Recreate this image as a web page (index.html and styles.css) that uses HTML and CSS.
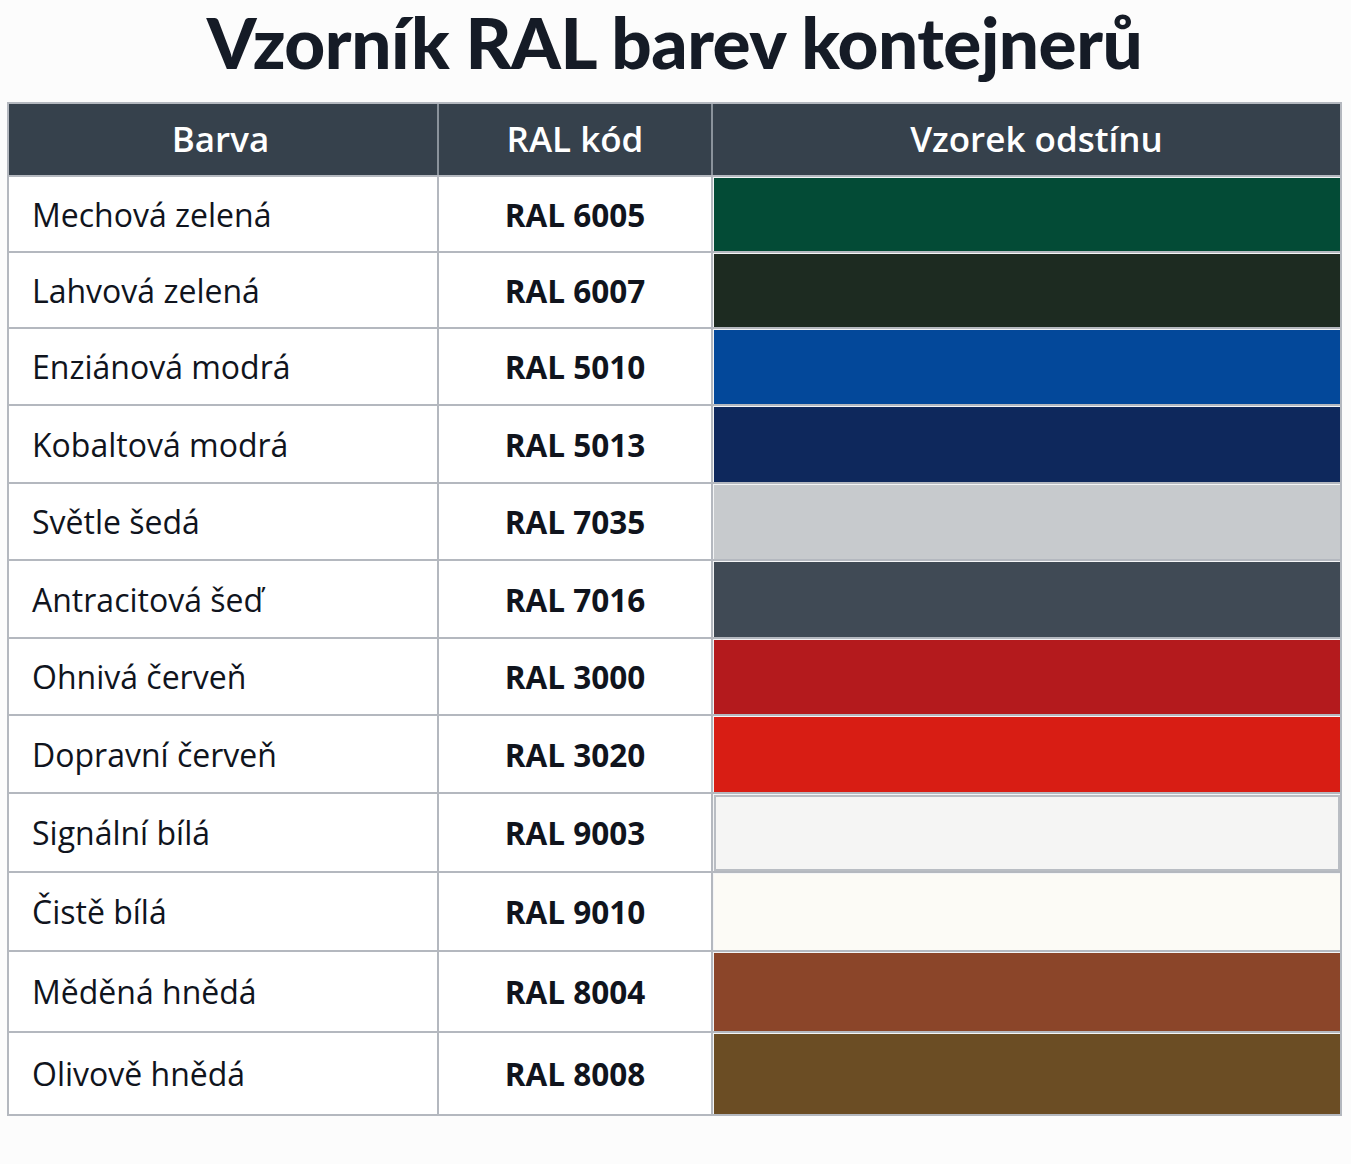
FILE: index.html
```html
<!DOCTYPE html>
<html lang="cs">
<head>
<meta charset="utf-8">
<title>Vzorník RAL barev kontejnerů</title>
<link rel="stylesheet" href="styles.css">
</head>
<body>
<div class="sheet">
  <h1 class="title">Vzorník RAL barev kontejnerů</h1>
  <div class="table">
    <div class="row head">
      <div class="cell">Barva</div>
      <div class="cell">RAL kód</div>
      <div class="cell">Vzorek odstínu</div>
    </div>
    <div class="row">
      <div class="cell name">Mechová zelená</div>
      <div class="cell code">RAL 6005</div>
      <div class="cell swatch"><div class="chip ral6005"></div></div>
    </div>
    <div class="row">
      <div class="cell name">Lahvová zelená</div>
      <div class="cell code">RAL 6007</div>
      <div class="cell swatch"><div class="chip ral6007"></div></div>
    </div>
    <div class="row">
      <div class="cell name">Enziánová modrá</div>
      <div class="cell code">RAL 5010</div>
      <div class="cell swatch"><div class="chip ral5010"></div></div>
    </div>
    <div class="row">
      <div class="cell name">Kobaltová modrá</div>
      <div class="cell code">RAL 5013</div>
      <div class="cell swatch"><div class="chip ral5013"></div></div>
    </div>
    <div class="row">
      <div class="cell name">Světle šedá</div>
      <div class="cell code">RAL 7035</div>
      <div class="cell swatch"><div class="chip ral7035"></div></div>
    </div>
    <div class="row">
      <div class="cell name">Antracitová šeď</div>
      <div class="cell code">RAL 7016</div>
      <div class="cell swatch"><div class="chip ral7016"></div></div>
    </div>
    <div class="row">
      <div class="cell name">Ohnivá červeň</div>
      <div class="cell code">RAL 3000</div>
      <div class="cell swatch"><div class="chip ral3000"></div></div>
    </div>
    <div class="row">
      <div class="cell name">Dopravní červeň</div>
      <div class="cell code">RAL 3020</div>
      <div class="cell swatch"><div class="chip ral3020"></div></div>
    </div>
    <div class="row">
      <div class="cell name">Signální bílá</div>
      <div class="cell code">RAL 9003</div>
      <div class="cell swatch"><div class="chip ral9003"></div></div>
    </div>
    <div class="row">
      <div class="cell name">Čistě bílá</div>
      <div class="cell code">RAL 9010</div>
      <div class="cell swatch"><div class="chip ral9010"></div></div>
    </div>
    <div class="row">
      <div class="cell name">Měděná hnědá</div>
      <div class="cell code">RAL 8004</div>
      <div class="cell swatch"><div class="chip ral8004"></div></div>
    </div>
    <div class="row">
      <div class="cell name">Olivově hnědá</div>
      <div class="cell code">RAL 8008</div>
      <div class="cell swatch"><div class="chip ral8008"></div></div>
    </div>
  </div>
</div>
</body>
</html>
```

FILE: styles.css
```css
* { box-sizing: border-box; }

html, body {
  margin: 0;
  padding: 0;
  background: #fcfcfc;
}

.sheet {
  width: 1351px;
  padding: 0 9px 0 7px;
}

.title {
  margin: 0;
  height: 102px;
  padding-top: 2px;
  text-align: center;
  font-family: "Lato", "Liberation Sans", sans-serif;
  font-weight: 900;
  font-size: 71px;
  line-height: 80px;
  letter-spacing: -0.5px;
  color: #151b26;
}

.table {
  width: 1335px;
  border: 2px solid #b4b8bf;
  background: #ffffff;
}

.row {
  display: grid;
  grid-template-columns: 428px 274px 1fr;
  border-top: 2px solid #b4b8bf;
  height: 78px;
}

.row.head {
  border-top: none;
  height: 71px;
  background: #36414c;
}

.cell {
  display: flex;
  align-items: center;
  font-family: "Open Sans", "Noto Sans", sans-serif;
  color: #10141d;
}

.cell + .cell {
  border-left: 2px solid #b4b8bf;
}

.head .cell {
  justify-content: center;
  color: #ffffff;
  font-weight: 600;
  font-size: 35px;
  letter-spacing: 0;
  padding-bottom: 2px;
}

.head .cell:first-child {
  padding-right: 5px;
}

.head .cell:last-child {
  padding-left: 20px;
}

.head .cell + .cell {
  border-left-color: #8a929b;
}

.name {
  padding-left: 23px;
  font-size: 32px;
  font-weight: 500;
  letter-spacing: 0;
}

.code {
  justify-content: center;
  font-size: 31.5px;
  font-weight: 700;
  letter-spacing: 0;
}

.swatch {
  align-items: stretch;
  padding: 1px 0 0 1px;
  background: #f4f5f6;
}

.chip { flex: 1; }

.row:nth-child(2) { height: 76px; }
.row:nth-child(3) { height: 76px; }
.row:nth-child(4) { height: 77px; }
.row:nth-child(5) { height: 78px; }
.row:nth-child(6) { height: 77px; }
.row:nth-child(7) { height: 78px; }
.row:nth-child(8) { height: 77px; }
.row:nth-child(9) { height: 78px; }
.row:nth-child(10) { height: 79px; }
.row:nth-child(11) { height: 79px; }
.row:nth-child(12) { height: 81px; }
.row:nth-child(13) { height: 83px; }

.ral6005 { background: #034b36; }
.ral6007 { background: #1d2b21; }
.ral5010 { background: #03489a; }
.ral5013 { background: #0e285c; }
.ral7035 { background: #c7cacd; }
.ral7016 { background: #404a55; }
.ral3000 { background: #b41a1d; }
.ral3020 { background: #d81d14; }
.ral9003 { background: #f5f5f4; border: 2px solid #b9bdc3; }
.ral9010 { background: #fcfbf6; }
.ral8004 { background: #8b4529; }
.ral8008 { background: #6b4d24; }
```
